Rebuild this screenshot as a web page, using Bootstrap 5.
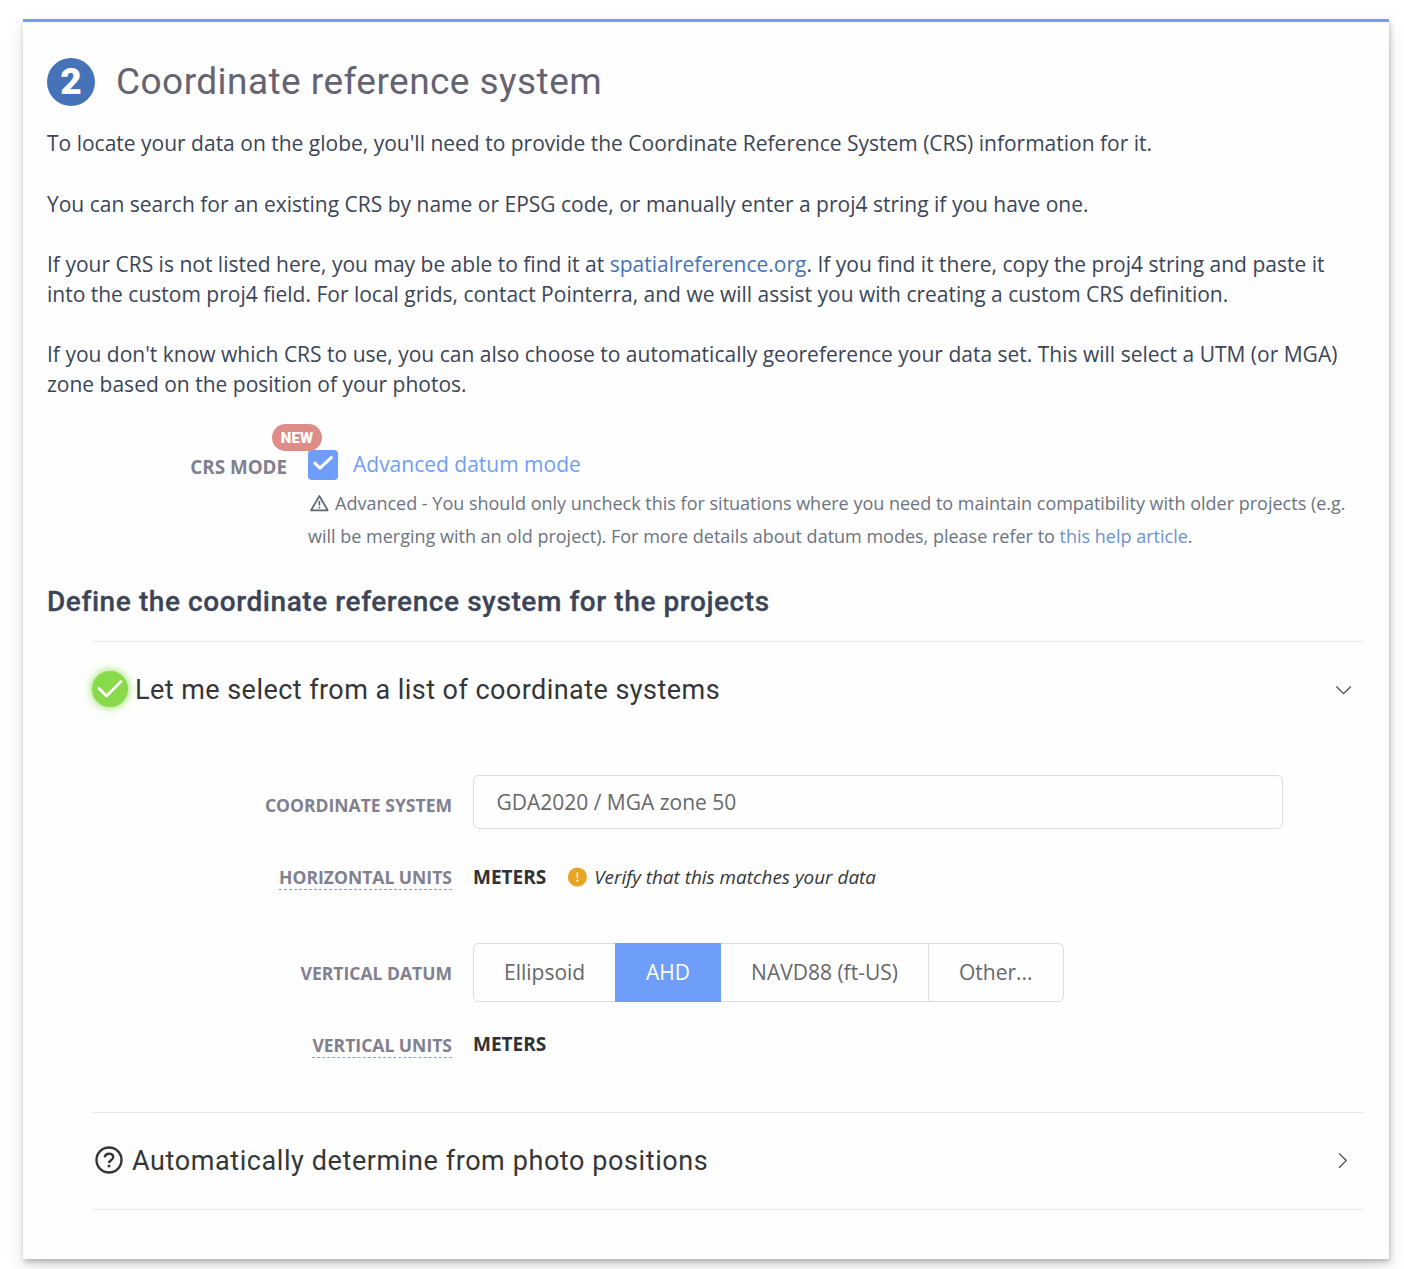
<!DOCTYPE html>
<html lang="en">
<head>
<meta charset="utf-8">
<meta name="viewport" content="width=device-width, initial-scale=1">
<title>Coordinate reference system</title>
<link href="https://cdn.jsdelivr.net/npm/bootstrap@5.3.0/dist/css/bootstrap.min.css" rel="stylesheet">
<style>
body{font-family:"Open Sans","Noto Sans",sans-serif;font-size:21px;color:#3b4557;background:#fff;height:1269px;padding:19px 15px 0 23px;overflow:hidden}
.step-card{height:1240px;background:#fefefe;border:0;border-top:3px solid #6e9ef9;border-radius:0;padding:36px 24px 0;box-shadow:1px 3px 5px rgba(0,0,0,.22),0 8px 18px rgba(0,0,0,.12)}
.head-font{font-family:Roboto,Inter,sans-serif}
.step-number{width:48px;height:48px;background:#4673b8;color:#fff;font-weight:900;font-size:37px;line-height:48px;margin-right:21px}
.step-title{font-size:37px;line-height:48px;color:#646372;letter-spacing:.45px}
.intro{margin-top:23px}
.intro p{line-height:29.5px;margin:0 0 31.1px;white-space:nowrap}
a{color:#4673b8;text-decoration:none}
.mode-row{margin-top:-4px}
.mode-label{width:240px;font-size:18.8px;font-weight:700;color:#80808f;padding-top:4px;line-height:26px}
.field-label{width:360px;font-size:17.55px;font-weight:700;color:#80808f;line-height:24px;margin-right:21px;padding-top:1px}
.new-pill{left:-36px;top:-26px;width:50px;height:27px;border-radius:14px;background:#dd8c87;color:#fff;font-size:15px;font-weight:900;line-height:28px;letter-spacing:.2px}
.mode-body{margin-left:21px}
.tick-box{width:30px;height:30px;border-radius:4px;background:#6e9ef9}
.mode-name{font-size:21px;color:#6e9ef9;line-height:29px;margin-left:15px}
.help-note{font-size:18px;line-height:33px;color:#6b7481;margin-top:7px}
.help-note a{color:#6e92d1}
.help-note svg{margin:-5px 6px 0 1px}
.sub-title{font-size:28px;font-weight:500;line-height:34px;margin:32px 0 0;letter-spacing:.58px;-webkit-text-stroke:.3px #3b4557}
.choices{margin:22px 1px 0 45px;border-top:1px solid #e9e9ec}
.choice-head{font-size:27px;color:#343638;height:96px}
.choice-item{border-bottom:1px solid #e9e9ec}
.choice-open{height:471px}
.choice-closed{height:97px}
.good{width:36px;height:36px;background:#89da4b;box-shadow:0 0 10px #89da4b;margin-right:7px;margin-top:-2px}
.list-text{letter-spacing:.45px}
.auto-text{letter-spacing:.59px}
.form-fields{padding-top:37px}
.field-line{height:40px}
.dotted{border-bottom:1px dashed #8f9fbd}
.system-label{padding-top:6px}
.horizontal-label{padding-top:0;padding-bottom:1px}
.system-input{width:810px;height:54px;border:1px solid #dadce0;border-radius:6px;color:#67686b;font-size:21px;padding:0 22.4px;background:#fefefe;box-shadow:none}
.unit-value{font-size:19px;font-weight:700;color:#303235}
.verify{font-size:18.9px;color:#343638}
.datum-group .btn{height:59px;line-height:57px;border-color:#dadce0;color:#67686b;font-size:21px;border-radius:6px;padding:0 30px}
.datum-group .btn:first-child{padding-right:29.5px}
.datum-group .btn.active{background:#6e9ef9;border-color:#6e9ef9;color:#fff;padding:0 30.2px}
</style>
</head>
<body>
<main class="card step-card">
  <header class="d-flex align-items-center head-font">
    <div class="step-number rounded-circle text-center">2</div>
    <h1 class="step-title fw-normal m-0">Coordinate reference system</h1>
  </header>
  <section class="intro">
    <p>To locate your data on the globe, you'll need to provide the Coordinate Reference System (CRS) information for it.</p>
    <p>You can search for an existing CRS by name or EPSG code, or manually enter a proj4 string if you have one.</p>
    <p>If your CRS is not listed here, you may be able to find it at <a href="#">spatialreference.org</a>. If you find it there, copy the proj4 string and paste it<br>into the custom proj4 field. For local grids, contact Pointerra, and we will assist you with creating a custom CRS definition.</p>
    <p>If you don't know which CRS to use, you can also choose to automatically georeference your data set. This will select a UTM (or MGA)<br>zone based on the position of your photos.</p>
  </section>
  <section class="mode-row d-flex pt-4">
    <div class="mode-label text-end">CRS MODE</div>
    <div class="mode-body position-relative">
      <span class="new-pill position-absolute text-center head-font">NEW</span>
      <label class="d-flex">
        <span class="tick-box"><svg class="d-block" width="30" height="30" viewBox="0 0 30 30" fill="none" stroke="#fff" stroke-width="3" stroke-linecap="round" stroke-linejoin="round"><path d="M6.8 13.2l5.2 5L23.3 7.6"/></svg></span>
        <span class="mode-name">Advanced datum mode</span>
      </label>
      <div class="help-note text-nowrap"><svg width="20" height="18" viewBox="0 0 20 18" fill="none" stroke="#5c6673" stroke-width="1.7" stroke-linejoin="round"><path d="M10.4 2L18.7 16.3H2.1z"/><path d="M10.4 7v4.6M10.4 12.8v1.8"/></svg>Advanced - You should only uncheck this for situations where you need to maintain compatibility with older projects (e.g.<br>will be merging with an old project). For more details about datum modes, please refer to <a href="#">this help article</a>.</div>
    </div>
  </section>
  <h2 class="sub-title head-font">Define the coordinate reference system for the projects</h2>
  <section class="choices">
    <div class="choice-item choice-open">
      <div class="choice-head head-font d-flex align-items-center">
        <span class="good rounded-circle"><svg class="d-block" width="36" height="36" viewBox="0 0 36 36" fill="none" stroke="#fff" stroke-width="2.8" stroke-linecap="round" stroke-linejoin="round"><path d="M7 17.5l7.5 7.5L29 10.5"/></svg></span>
        <span class="list-text">Let me select from a list of coordinate systems</span>
        <svg class="ms-auto me-2" width="26" height="26" viewBox="0 0 26 26" fill="none" stroke="#4a4b4e" stroke-width="1.3"><path d="M6.4 9.5l7.2 7.2 7.2-7.2"/></svg>
      </div>
      <div class="form-fields">
        <div class="d-flex align-items-center">
          <label class="field-label system-label text-end" for="system">COORDINATE SYSTEM</label>
          <input id="system" class="form-control system-input" value="GDA2020 / MGA zone 50">
        </div>
        <div class="field-line d-flex align-items-center" style="margin-top:28px">
          <div class="field-label horizontal-label text-end"><span class="dotted">HORIZONTAL UNITS</span></div>
          <span class="unit-value">METERS</span>
          <svg style="margin:0 7px 0 21px" width="20" height="20" viewBox="0 0 20 20"><circle cx="10.4" cy="10" r="9.6" fill="#e6a524"/><path d="M10.4 5.3v6" stroke="#fff" stroke-width="1.5"/><circle cx="10.4" cy="13.8" r="1" fill="#fff"/></svg>
          <em class="verify">Verify that this matches your data</em>
        </div>
        <div class="d-flex align-items-center" style="margin-top:46px">
          <div class="field-label text-end">VERTICAL DATUM</div>
          <div class="btn-group datum-group">
            <button type="button" class="btn">Ellipsoid</button>
            <button type="button" class="btn active">AHD</button>
            <button type="button" class="btn">NAVD88 (ft-US)</button>
            <button type="button" class="btn">Other...</button>
          </div>
        </div>
        <div class="field-line d-flex align-items-center" style="margin-top:22px">
          <div class="field-label text-end"><span class="dotted">VERTICAL UNITS</span></div>
          <span class="unit-value">METERS</span>
        </div>
      </div>
    </div>
    <div class="choice-item choice-closed choice-head head-font d-flex align-items-center">
      <svg style="margin:-3px 9px 0 3px" width="28" height="28" viewBox="0 0 28 28" fill="none" stroke="#343638" stroke-width="2.4"><circle cx="14" cy="14" r="12.5"/><path d="M9.8 11.4c.2-2.3 1.9-3.7 4.3-3.7s4.1 1.3 4.1 3.4c0 1.6-.8 2.4-2.3 3.3-1.4.8-1.8 1.3-1.8 2.6"/><path d="M14 18.7v2.6" stroke-width="2.6"/></svg>
      <span class="auto-text">Automatically determine from photo positions</span>
      <svg class="ms-auto me-2" width="26" height="26" viewBox="0 0 26 26" fill="none" stroke="#4a4b4e" stroke-width="1.3"><path d="M9 5.4l7.2 7.2L9 19.8"/></svg>
    </div>
  </section>
</main>
<script src="https://cdn.jsdelivr.net/npm/bootstrap@5.3.0/dist/js/bootstrap.bundle.min.js"></script>
</body>
</html>
